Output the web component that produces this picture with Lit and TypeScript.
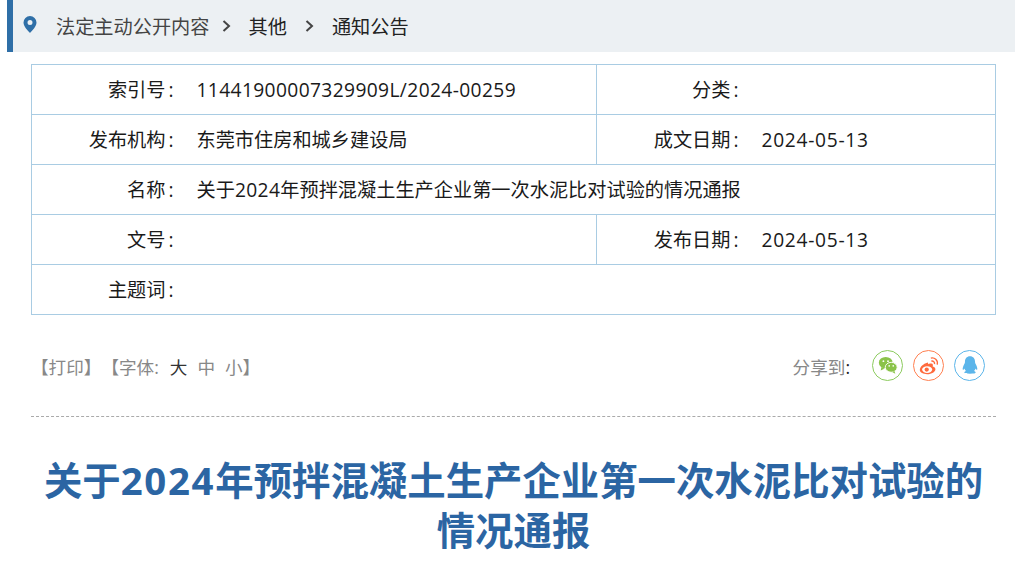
import { LitElement, html, css } from "lit";
import { customElement } from "lit/decorators.js";

@customElement("app-root")
export class AppRoot extends LitElement {
  static styles = css`
    :host {
      display: block;
      width: 1015px;
      height: 578px;
      overflow: hidden;
      background: #fff;
      font-family: "Open Sans", "Noto Sans CJK SC", sans-serif;
      color: #222;
    }
    .crumb {
      margin-left: 7px;
      height: 52px;
      box-sizing: border-box;
      border-left: 6px solid #2f6fa7;
      background: #ecf0f3;
      display: flex;
      align-items: center;
      font-size: 19.2px;
      padding-left: 10px;
    }
    .pin { width: 14px; height: 17px; margin-right: 19px; margin-top: -3px; }
    .crumb .first { color: #444; }
    .chev { width: 9px; height: 12px; margin: 0 18px 0 12px; }
    .chev.b { margin: 0 18px 0 18px; }
    table {
      margin: 12px 0 0 31px;
      width: 965px;
      border-collapse: collapse;
      table-layout: fixed;
      font-size: 19.2px;
      line-height: 26px;
      color: #1a1a1a;
    }
    td {
      border: 1px solid #a9cce3;
      height: 49px;
      padding: 0;
      white-space: nowrap;
    }
    .lab { text-align: right; padding-right: 22px; border-right: none; }
    .val { border-left: none; }
    .n { letter-spacing: 0.38px; }
    .d { letter-spacing: 0.7px; }
    .c { margin: 0 1px 0 3px; }
    .tools {
      margin: 34px 30px 0 31px;
      display: flex;
      align-items: center;
      height: 32px;
      font-size: 17.6px;
      color: #888;
    }
    .txt { margin-top: 3px; }
    .font { margin-right: 11px; }
    .dark { color: #333; }
    .size { margin-right: 10px; }
    .spacer { flex: 1; }
    .share { margin-right: 11px; }
    .colon { color: #222; }
    .ic {
      width: 31px;
      height: 31px;
      box-sizing: border-box;
      border-radius: 50%;
      border: 1px solid;
      margin-left: 10px;
      display: flex;
      align-items: center;
      justify-content: center;
    }
    .ic svg { width: 22px; height: 22px; }
    .ic.w { border-color: #8ccb5e; margin-left: 11px; }
    .ic.s { border-color: #ff7f50; }
    .ic.q { border-color: #5bb5ea; }
    .rule {
      margin: 35px 19px 0 31px;
      border-top: 1px dashed #aaa;
    }
    h1 {
      margin: 38px 19px 0 31px;
      text-align: center;
      font-size: 38.4px;
      line-height: 50px;
      font-weight: 700;
      color: #2b65a3;
    }
    h1 .y { letter-spacing: 1.7px; }
  `;

  private pin() {
    return html`<svg class="pin" viewBox="0 0 14 17"><path fill="#2f6fa7" fill-rule="evenodd" d="M7 0a6.500 6.500 0 0 0-6.500 6.500c0 3.900 4.500 8.300 6.500 10.500 2-2.200 6.500-6.600 6.500-10.500A6.500 6.500 0 0 0 7 0zm0 4a2.500 2.500 0 1 1 0 5 2.500 2.500 0 0 1 0-5z"/></svg>`;
  }

  private chev(cls: string) {
    return html`<svg class="chev ${cls}" viewBox="0 0 9 12"><path d="M1.500 1l5.500 5-5.500 5" fill="none" stroke="#444" stroke-width="2"/></svg>`;
  }

  render() {
    const colon = html`<span class="c">:</span>`;
    return html`
      <nav class="crumb">
        ${this.pin()}
        <span class="first">法定主动公开内容</span>
        ${this.chev("")}
        <span>其他</span>
        ${this.chev("b")}
        <span>通知公告</span>
      </nav>
      <table>
        <colgroup>
          <col style="width:165px" /><col style="width:400px" /><col style="width:165px" /><col />
        </colgroup>
        <tr>
          <td class="lab">索引号${colon}</td><td class="val"><span class="n">11441900007329909L/2024-00259</span></td>
          <td class="lab">分类${colon}</td><td class="val"></td>
        </tr>
        <tr>
          <td class="lab">发布机构${colon}</td><td class="val">东莞市住房和城乡建设局</td>
          <td class="lab">成文日期${colon}</td><td class="val"><span class="d">2024-05-13</span></td>
        </tr>
        <tr>
          <td class="lab">名称${colon}</td><td class="val" colspan="3">关于<span class="n">2024</span>年预拌混凝土生产企业第一次水泥比对试验的情况通报</td>
        </tr>
        <tr>
          <td class="lab">文号${colon}</td><td class="val"></td>
          <td class="lab">发布日期${colon}</td><td class="val"><span class="d">2024-05-13</span></td>
        </tr>
        <tr>
          <td class="lab">主题词${colon}</td><td class="val" colspan="3"></td>
        </tr>
      </table>
      <div class="tools">
        <span class="txt">【打印】</span>
        <span class="txt font">【字体:</span>
        <span class="txt size dark">大</span>
        <span class="txt size">中</span>
        <span class="txt">小】</span>
        <span class="spacer"></span>
        <span class="txt share">分享到<span class="colon">:</span></span>
        <span class="ic w"><svg viewBox="0 0 24 24">
          <ellipse cx="9.500" cy="9.500" rx="7.500" ry="6.300" fill="#8bc34a"/>
          <path d="M5 14l-1 4 4-2z" fill="#8bc34a"/>
          <ellipse cx="15.500" cy="14.500" rx="6.500" ry="5.400" fill="#8bc34a" stroke="#fff"/>
          <path d="M19 18.500l1 3-3.500-2z" fill="#8bc34a"/>
          <circle cx="7" cy="7.800" r="1" fill="#fff"/><circle cx="12" cy="7.800" r="1" fill="#fff"/>
          <circle cx="13.300" cy="13" r=".9" fill="#fff"/><circle cx="17.700" cy="13" r=".9" fill="#fff"/>
        </svg></span>
        <span class="ic s"><svg viewBox="0 0 24 24">
          <path d="M10 9.500c-4 1-8 4.500-8 8 0 3 4 4.500 8 4.500 5 0 9-2.700 9-5.500 0-2-2-2.500-3-3 .6-1.500.3-3-1.500-3.200-1.400-.2-3 .5-3.500.8.300-1.300-.2-2.200-1-1.600z" fill="#ff6a3d"/>
          <ellipse cx="10" cy="17" rx="5.500" ry="3.600" fill="#fff"/>
          <circle cx="9.500" cy="17" r="2.300" fill="#ff6a3d"/>
          <path d="M14 4.500c4-1 8 2 7 7M14.500 7.800c2.200-.5 4 1 3.500 3.200" fill="none" stroke="#ff6a3d" stroke-width="1.500"/>
        </svg></span>
        <span class="ic q"><svg viewBox="0 0 24 24">
          <path d="M12 2.500c-3.500 0-5.500 2.700-5.500 6 0 1.500-.5 2-1.500 4-1 2-1.300 4.300-.7 4.700.5.300 1.100-.4 1.600-1.400.3 1.200 1 2.200 1.800 2.800-1.200.4-1.900 1-1.900 1.600 0 .9 1.900 1.300 6.200 1.300s6.200-.4 6.200-1.300c0-.6-.7-1.200-1.900-1.600.8-.6 1.500-1.600 1.800-2.800.5 1 1.100 1.700 1.600 1.400.6-.4.300-2.700-.7-4.700-1-2-1.500-2.500-1.500-4 0-3.300-2-6-5.500-6z" fill="#5bb5ea"/>
        </svg></span>
      </div>
      <div class="rule"></div>
      <h1>关于<span class="y">2024</span>年预拌混凝土生产企业第一次水泥比对试验的情况通报</h1>
    `;
  }
}
